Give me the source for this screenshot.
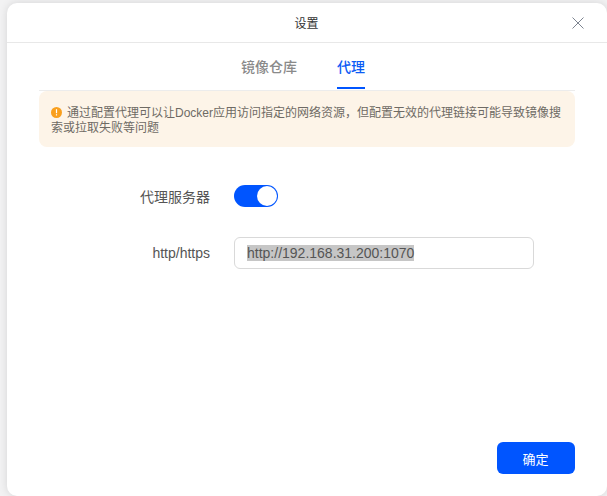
<div class="page">
  <div class="dialog">
    <header class="head">
      <span class="title">设置</span>
      <button class="close" aria-label="关闭">
        <svg width="12" height="12" viewBox="0 0 12 12"><path d="M0.5 0.5L11.5 11.5M11.5 0.5L0.5 11.5" stroke="#7d8490" stroke-width="1" fill="none"/></svg>
      </button>
    </header>
    <nav class="tabs">
      <span class="tab">镜像仓库</span>
      <span class="tab active">代理</span>
    </nav>
    <div class="notice">
      <p><svg class="warn" width="11" height="11" viewBox="0 0 11 11"><circle cx="5.5" cy="5.5" r="5.5" fill="#f99f1d"/><rect x="4.9" y="2.2" width="1.2" height="4" fill="#fff"/><rect x="4.9" y="7.2" width="1.2" height="1.3" fill="#fff"/></svg>通过配置代理可以让Docker应用访问指定的网络资源，但配置无效的代理链接可能导致镜像搜索或拉取失败等问题</p>
    </div>
    <div class="form">
      <div class="row first">
        <span class="label">代理服务器</span>
        <span class="switch"><span class="knob"></span></span>
      </div>
      <div class="row second">
        <span class="label">http/https</span>
        <div class="input"><span class="sel">http://192.168.31.200:1070</span></div>
      </div>
    </div>
    <footer class="foot"><button class="ok">确定</button></footer>
  </div>
</div>

<style>
  :global(body) { margin: 0; background: #f2f2f3; }
  .page {
    width: 607px; height: 496px; overflow: hidden; box-sizing: border-box;
    padding: 3px 0 0 7px;
    font-family: "Liberation Sans", "Noto Sans CJK SC", sans-serif;
  }
  .dialog {
    width: 600px; height: 493px; background: #fff; border-radius: 10px;
    box-shadow: 0 0 8px rgba(0,0,0,.12);
    display: flex; flex-direction: column;
  }
  .head {
    height: 39px; flex: none; border-bottom: 1px solid #e8e8e8;
    display: flex; align-items: center; justify-content: center; position: relative;
  }
  .title { font-size: 12px; color: #333; margin-left: -1px; }
  .close {
    position: absolute; right: 23px; top: 14px; width: 12px; height: 12px;
    padding: 0; border: 0; background: none; display: block;
  }
  .close svg { display: block; }
  .tabs {
    height: 48px; flex: none; margin: 0 32px; box-sizing: border-box;
    padding-left: 202px; gap: 40px;
    display: flex; align-items: stretch;
    border-bottom: 1px solid #ececec;
  }
  .tab {
    font-size: 14px; font-weight: 500; color: #8a8a8a; line-height: 48px; height: 45px;
  }
  .tab.active { color: #0c5cf5; border-bottom: 2px solid #0055ff; width: 28px; height: 44px; white-space: nowrap; }
  .notice {
    margin: 0 32px; background: #fdf4e8;
    border-radius: 8px; height: 56px; box-sizing: border-box; padding: 15px 12px 0 12px;
  }
  .notice p { margin: 0; font-size: 12px; line-height: 15px; color: #6e6a64; }
  .warn { vertical-align: -1px; margin-right: 5px; }
  .form { flex: 1; }
  .row { display: flex; align-items: center; }
  .first { margin-top: 37px; height: 24px; }
  .second { margin-top: 29px; height: 32px; }
  .label { width: 203px; text-align: right; font-size: 14px; color: #555; }
  .switch {
    margin-left: 24px; width: 44px; height: 22px; border-radius: 11px; background: #0055ff;
    display: flex; justify-content: flex-end; align-items: center; padding-right: 1px; box-sizing: border-box;
  }
  .knob { width: 20px; height: 20px; border-radius: 50%; background: #fff; }
  .input {
    margin-left: 24px; width: 300px; height: 32px; box-sizing: border-box;
    border: 1px solid #d9d9d9; border-radius: 6px; padding-left: 12px;
    display: flex; align-items: center; font-size: 14px; color: #555;
  }
  .sel { background: #c6c6c6; line-height: 16px; }
  .foot { display: flex; justify-content: flex-end; padding: 0 32px 22px 0; }
  .ok {
    width: 78px; height: 32px; border: 0; border-radius: 6px; background: #0055ff; color: #fff;
    font-family: inherit; font-size: 13px; padding: 0 1px 0 0;
  }
</style>
